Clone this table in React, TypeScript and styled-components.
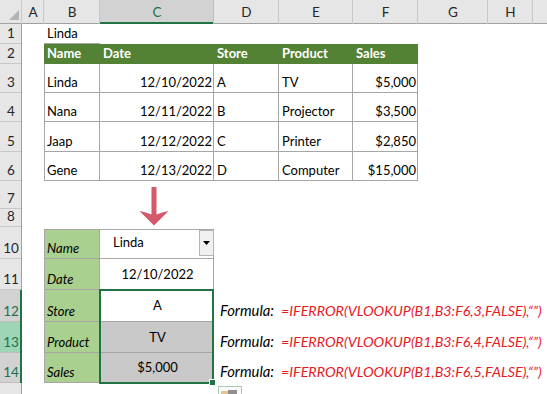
import styled, { createGlobalStyle, css } from 'styled-components';

const GlobalStyle = createGlobalStyle`
  html, body {
    margin: 0;
    padding: 0;
    background: #fff;
  }
  body {
    font-family: Lato, 'Liberation Sans', sans-serif;
  }
`;

// grid column for each sheet letter (column 1 holds the row numbers)
const COL: Record<string, number> = { A: 2, B: 3, C: 4, D: 5, E: 6, F: 7, G: 8, H: 9 };
const LETTERS = ['A', 'B', 'C', 'D', 'E', 'F', 'G', 'H'];
const ROW_COUNT = 15;
const SELECTED_ROWS = [12, 13, 14];

const LINE = '#a6a6a6';

type Align = 'left' | 'center' | 'right';

const lines = (spec = '', color = LINE) => {
  const parts: string[] = [];
  if (spec.includes('t')) parts.push(`inset 0 1px 0 ${color}`);
  if (spec.includes('b')) parts.push(`inset 0 -1px 0 ${color}`);
  if (spec.includes('l')) parts.push(`inset 1px 0 0 ${color}`);
  if (spec.includes('r')) parts.push(`inset -1px 0 0 ${color}`);
  return parts.length ? parts.join(', ') : 'none';
};

const rowOf = (r: number) => r + 1;

const Sheet = styled.div`
  display: grid;
  grid-template-columns: 22px 22px 56px 114px 65px 74px 65px 70px 45px 1fr;
  grid-template-rows: 24px 20px 20px 29px 29px 30px 29px 28px 18px 2px 30px 31px 32px 31px 30px 1fr;
  width: 547px;
  height: 394px;
  overflow: hidden;
  font-family: Lato, 'Liberation Sans', sans-serif;
  font-size: 13px;
  color: #000;
`;

const Corner = styled.div`
  grid-column: 1 / span 2;
  grid-row: 1;
  width: 22px;
  background: #e6e6e6;
  box-shadow: inset -1px 0 0 #c8c8c8, inset 0 -1px 0 #a0a0a0;
  display: flex;
  align-items: flex-end;
  justify-content: flex-end;
  padding: 0 3px 4px 0;
  box-sizing: border-box;
`;

const ColHead = styled.div<{ $col: number; $sel?: boolean }>`
  grid-column: ${(p) => p.$col};
  grid-row: 1;
  display: flex;
  align-items: center;
  justify-content: center;
  font-size: 13.5px;
  color: #262626;
  background: #e6e6e6;
  box-shadow: inset -1px 0 0 #c8c8c8, inset 0 -1px 0 #a0a0a0;
  ${(p) =>
    p.$sel &&
    css`
      background: #d2d2d2;
      color: #217346;
      box-shadow: inset -1px 0 0 #bdbdbd, inset 0 -2px 0 #217346;
    `}
`;

const HeadFiller = styled.div`
  grid-column: 10;
  grid-row: 1;
  background: #e6e6e6;
  box-shadow: inset 0 -1px 0 #a0a0a0;
`;

const RowHead = styled.div<{ $row: number; $state?: 'sel' | 'hot' }>`
  grid-column: 1;
  grid-row: ${(p) => p.$row};
  display: flex;
  align-items: flex-end;
  justify-content: center;
  padding-bottom: 4px;
  box-sizing: border-box;
  line-height: 1;
  font-size: 13.5px;
  color: #262626;
  background: #e6e6e6;
  box-shadow: inset -1px 0 0 #a0a0a0, inset 0 -1px 0 #c8c8c8;
  ${(p) =>
    p.$state &&
    css`
      color: #217346;
      background: ${p.$state === 'hot' ? '#9fd5b7' : '#d2d2d2'};
      box-shadow: inset -2px 0 0 #217346, inset 0 -1px 0 #bdbdbd;
    `}
`;

const Cell = styled.div<{
  $col: number;
  $row: number;
  $bg?: string;
  $align?: Align;
  $middle?: boolean;
  $bold?: boolean;
  $italic?: boolean;
  $color?: string;
  $lines?: string;
}>`
  grid-column: ${(p) => p.$col};
  grid-row: ${(p) => p.$row};
  display: flex;
  align-items: ${(p) => (p.$middle ? 'center' : 'flex-end')};
  justify-content: ${(p) =>
    p.$align === 'right' ? 'flex-end' : p.$align === 'center' ? 'center' : 'flex-start'};
  padding: ${(p) => (p.$middle ? '0 2px 1px 3px' : '0 2px 4px 3px')};
  box-sizing: border-box;
  line-height: 1;
  white-space: nowrap;
  background: ${(p) => p.$bg ?? 'transparent'};
  color: ${(p) => p.$color ?? '#000'};
  font-weight: ${(p) => (p.$bold ? 700 : 400)};
  font-style: ${(p) => (p.$italic ? 'italic' : 'normal')};
  box-shadow: ${(p) => lines(p.$lines)};
`;

const ArrowBox = styled.div`
  grid-column: 4;
  grid-row: ${rowOf(7)} / span 2;
`;

const DropCell = styled.div`
  grid-column: 4;
  grid-row: ${rowOf(10)};
  box-shadow: ${lines('trb')};
  padding: 1px 0 3px 0;
  box-sizing: border-box;
  display: flex;
`;

const Combo = styled.div`
  flex: 1;
  display: flex;
  align-items: center;
  background: #fff;
`;

const ComboText = styled.span`
  flex: 1;
  padding-left: 13px;
  line-height: 1;
  padding-bottom: 1px;
`;

const ComboButton = styled.div`
  width: 15px;
  align-self: stretch;
  box-sizing: border-box;
  background: #f0f0f0;
  border: 1px solid #b4b4b4;
  display: flex;
  align-items: center;
  justify-content: center;
`;

const Selection = styled.div`
  grid-column: 4;
  grid-row: ${rowOf(12)} / span 3;
  margin: -1px 0 -1px -1px;
  border: 2px solid #217346;
  position: relative;
  z-index: 2;
  pointer-events: none;
`;

const FillHandle = styled.div`
  position: absolute;
  right: -4px;
  bottom: -4px;
  width: 5px;
  height: 5px;
  background: #217346;
  border: 1px solid #fff;
`;

const FormulaLine = styled.div<{ $row: number }>`
  grid-column: 5 / -1;
  grid-row: ${(p) => p.$row};
  display: flex;
  align-items: flex-end;
  padding: 0 0 4px 6px;
  line-height: 1;
  white-space: nowrap;
  font-style: italic;
`;

const FormulaLabel = styled.span`
  color: #000;
  font-size: 14.8px;
`;

const FormulaExpr = styled.span`
  margin-left: 7px;
  color: #e8191f;
  font-size: 14.3px;
`;

const PasteButton = styled.div`
  grid-column: 5;
  grid-row: ${rowOf(15)};
  margin: 3px 0 0 4px;
  width: 24px;
  height: 14px;
  box-sizing: border-box;
  border: 1px solid #a9c9b3;
  background: #fafafa;
`;

const table = [
  ['Linda', '12/10/2022', 'A', 'TV', '$5,000'],
  ['Nana', '12/11/2022', 'B', 'Projector', '$3,500'],
  ['Jaap', '12/12/2022', 'C', 'Printer', '$2,850'],
  ['Gene', '12/13/2022', 'D', 'Computer', '$15,000'],
];
const headers = ['Name', 'Date', 'Store', 'Product', 'Sales'];
const aligns: Align[] = ['left', 'right', 'left', 'left', 'right'];

const lookup = [
  { label: 'Name', value: null, bg: '#fff' },
  { label: 'Date', value: '12/10/2022', bg: '#fff' },
  { label: 'Store', value: 'A', bg: '#fff' },
  { label: 'Product', value: 'TV', bg: '#c9c9c9' },
  { label: 'Sales', value: '$5,000', bg: '#c9c9c9' },
];

function DownArrow() {
  return (
    <svg width="114" height="46" viewBox="0 0 114 46">
      <path
        d="M51.5 6 H56.5 V33.5 Q62 31 68.5 30 L54 44.5 L39.5 30 Q46 31 51.5 33.5 Z"
        fill="#d4596b"
      />
    </svg>
  );
}

export default function App() {
  return (
    <>
      <GlobalStyle />
      <Sheet>
        <Corner>
          <svg width="10" height="10" viewBox="0 0 10 10">
            <path d="M10 0 V10 H0 Z" fill="#b4b4b4" />
          </svg>
        </Corner>
        {LETTERS.map((l) => (
          <ColHead key={l} $col={COL[l]} $sel={l === 'C'}>
            {l}
          </ColHead>
        ))}
        <HeadFiller />

        {/* row 9 is hidden and row 15 only peeks in at the bottom edge */}
        {Array.from({ length: ROW_COUNT }, (_, i) => i + 1).map((r) =>
          r === 9 || r === 15 ? (
            <RowHead key={r} $row={rowOf(r)} />
          ) : (
            <RowHead
              key={r}
              $row={rowOf(r)}
              $state={r === 13 ? 'hot' : SELECTED_ROWS.includes(r) ? 'sel' : undefined}
            >
              {r}
            </RowHead>
          )
        )}

        <Cell $col={COL.B} $row={rowOf(1)} $lines="b">
          Linda
        </Cell>

        {headers.map((h, i) => (
          <Cell key={h} $col={COL.B + i} $row={rowOf(2)} $bg="#548235" $color="#fff" $bold>
            {h}
          </Cell>
        ))}

        {table.map((row, r) =>
          row.map((v, c) => (
            <Cell
              key={`${r}-${c}`}
              $col={COL.B + c}
              $row={rowOf(3 + r)}
              $align={aligns[c]}
              $lines={c === 0 ? 'lrb' : 'rb'}
            >
              {v}
            </Cell>
          ))
        )}

        <ArrowBox>
          <DownArrow />
        </ArrowBox>

        {lookup.map((item, i) => (
          <Cell
            key={item.label}
            $col={COL.B}
            $row={rowOf(10 + i)}
            $bg="#a9d08e"
            $italic
            $lines={i === 0 ? 'tlrb' : 'lrb'}
          >
            {item.label}
          </Cell>
        ))}

        <DropCell>
          <Combo>
            <ComboText>Linda</ComboText>
            <ComboButton>
              <svg width="7" height="4" viewBox="0 0 7 4">
                <path d="M0 0 H7 L3.5 4 Z" fill="#000" />
              </svg>
            </ComboButton>
          </Combo>
        </DropCell>

        {lookup.slice(1).map((item, i) => (
          <Cell
            key={item.label}
            $col={COL.C}
            $row={rowOf(11 + i)}
            $bg={item.bg}
            $align="center"
            $middle
            $lines="rb"
          >
            {item.value}
          </Cell>
        ))}

        <Selection>
          <FillHandle />
        </Selection>

        {[3, 4, 5].map((n, i) => (
          <FormulaLine key={n} $row={rowOf(12 + i)}>
            <FormulaLabel>Formula:</FormulaLabel>
            <FormulaExpr>{`=IFERROR(VLOOKUP(B1,B3:F6,${n},FALSE),“”)`}</FormulaExpr>
          </FormulaLine>
        ))}

        <PasteButton>
          <svg width="22" height="12" viewBox="0 0 22 12">
            <rect x="2" y="3" width="7" height="9" rx="1" fill="#e3c58f" />
            <rect x="9" y="2" width="9" height="10" fill="#8f8f8f" />
          </svg>
        </PasteButton>
      </Sheet>
    </>
  );
}
